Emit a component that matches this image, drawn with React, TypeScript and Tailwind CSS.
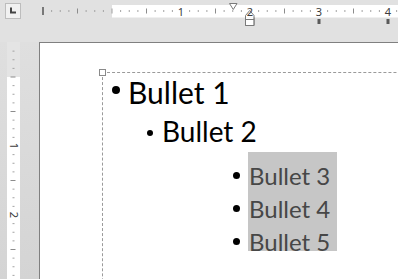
const STEP = 69 / 8

function HorizontalRuler() {
  const ticks = []
  const labels = []
  for (let k = -8; k <= 33; k++) {
    const x = 112 + k * STEP
    if (k === -8) {
      ticks.push(<rect key={k} x={x - 0.75} y={7} width={1.5} height={8} fill="#555" />)
    } else if (k % 8 === 0 && k > 0) {
      labels.push(
        <text key={k} x={x} y={15.5} textAnchor="middle" fontSize={11} fill="#3c3c3c" fontFamily="'Noto Sans', sans-serif">
          {k / 8}
        </text>
      )
    } else if (k % 4 === 0) {
      ticks.push(<rect key={k} x={x - 0.5} y={8.5} width={1} height={5} fill={k === 0 ? "#a0a0a0" : "#8c8c8c"} />)
    } else {
      ticks.push(<rect key={k} x={x - 0.5} y={10} width={1} height={2} fill="#a3a3a3" />)
    }
  }
  return (
    <svg width={377} height={42} className="shrink-0">
      <g transform="translate(-21 0)">
        <rect x={112} y={5} width={290} height={12.5} fill="#fff" />
        {ticks}
        {/* tab stops */}
        <rect x={317.5} y={19} width={3} height={5} fill="#5a5a5a" />
        <rect x={386.5} y={19} width={3} height={5} fill="#5a5a5a" />
        {/* first line indent */}
        <path d="M229.5 3.5 H237 L233.25 9.5 Z" fill="#fff" stroke="#7a7a7a" />
        {/* hanging indent */}
        <path d="M245.5 15.5 L249.75 10.5 L254 15.5 V25.5 H245.5 Z" fill="none" stroke="#7a7a7a" />
        <rect x={246} y={17.5} width={7.5} height={7.5} fill="#fff" />
        <line x1={245.5} y1={19.5} x2={254} y2={19.5} stroke="#7a7a7a" />
        <path d="M245.5 17.5 V25.5 H254 V17.5" fill="none" stroke="#7a7a7a" />
        {labels}
      </g>
    </svg>
  )
}

function VerticalRuler() {
  const ticks = []
  for (let k = -3; k <= 23; k++) {
    const y = 35 + k * STEP
    if (k % 8 === 0 && k > 0) {
      ticks.push(
        <text
          key={k}
          x={6.5}
          y={y + 3.5}
          textAnchor="middle"
          fontSize={11}
          fill="#3c3c3c"
          fontFamily="'Noto Sans', sans-serif"
          transform={`rotate(90 6.5 ${y})`}
        >
          {k / 8}
        </text>
      )
    } else if (k % 4 === 0) {
      ticks.push(<rect key={k} x={3.5} y={y - 0.5} width={5} height={1} fill="#8c8c8c" />)
    } else {
      ticks.push(<rect key={k} x={5.5} y={y - 0.5} width={2} height={1} fill="#a3a3a3" />)
    }
  }
  return (
    <svg width={13} height={237} className="overflow-visible">
      <rect x={0} y={0} width={13} height={35} fill="#e4e4e4" />
      <rect x={0} y={35} width={13} height={202} fill="#fff" />
      {ticks}
    </svg>
  )
}

export default function App() {
  return (
    <div className="w-[398px] h-[279px] overflow-hidden bg-[#e1e1e1] flex flex-col font-['Lato',sans-serif]">
      {/* ruler bar */}
      <div className="flex items-start h-[42px] shrink-0">
        <div className="ml-[5px] mt-[3px] w-4 h-4 shrink-0 border border-[#bdbdbd] bg-[#f1f1f1]">
          <svg width={14} height={14}>
            <path d="M5 3.5 V8.5 H10" fill="none" stroke="#444" strokeWidth={2} />
          </svg>
        </div>
        <HorizontalRuler />
      </div>

      <div className="flex flex-1 min-h-0">
        {/* left gutter with vertical ruler */}
        <div className="w-[39px] shrink-0 pl-[7px] bg-gradient-to-b from-[#dfdfdf] to-[#d4d4d4]">
          <VerticalRuler />
        </div>

        {/* page */}
        <div className="flex-1 min-w-0 bg-white border-l border-t border-[#808080]">
          <div className="relative ml-[62px] mt-[29px] w-[400px] h-[300px] border-l border-t border-dashed border-[#9a9a9a] pt-[1px]">
            <div className="absolute -left-[4px] -top-[4px] w-[7px] h-[7px] border border-[#8a8a8a] bg-white" />

            <div className="flex items-start h-[37px] ml-[9px]">
              <span className="mt-[12px] w-[8px] h-[8px] rounded-full bg-black shrink-0" />
              <span className="ml-[8px] text-[30px] leading-[37px] text-black whitespace-nowrap">Bullet 1</span>
            </div>

            <div className="flex items-start h-[41px] ml-[44px]">
              <span className="mt-[19px] w-[6px] h-[6px] rounded-full bg-black shrink-0" />
              <span className="ml-[9px] text-[28px] leading-[41px] text-black whitespace-nowrap">Bullet 2</span>
            </div>

            {["Bullet 3", "Bullet 4", "Bullet 5"].map((t) => (
              <div key={t} className="flex items-start h-[33px] ml-[130px]">
                <span className="mt-[20px] w-[7px] h-[7px] rounded-full bg-black shrink-0" />
                <span className="ml-[8px] w-[89px] h-[33px] pl-[1px] bg-[#c6c6c6] text-[24px] leading-[47px] text-[#474747] whitespace-nowrap">
                  {t}
                </span>
              </div>
            ))}
          </div>
        </div>
      </div>
    </div>
  )
}
